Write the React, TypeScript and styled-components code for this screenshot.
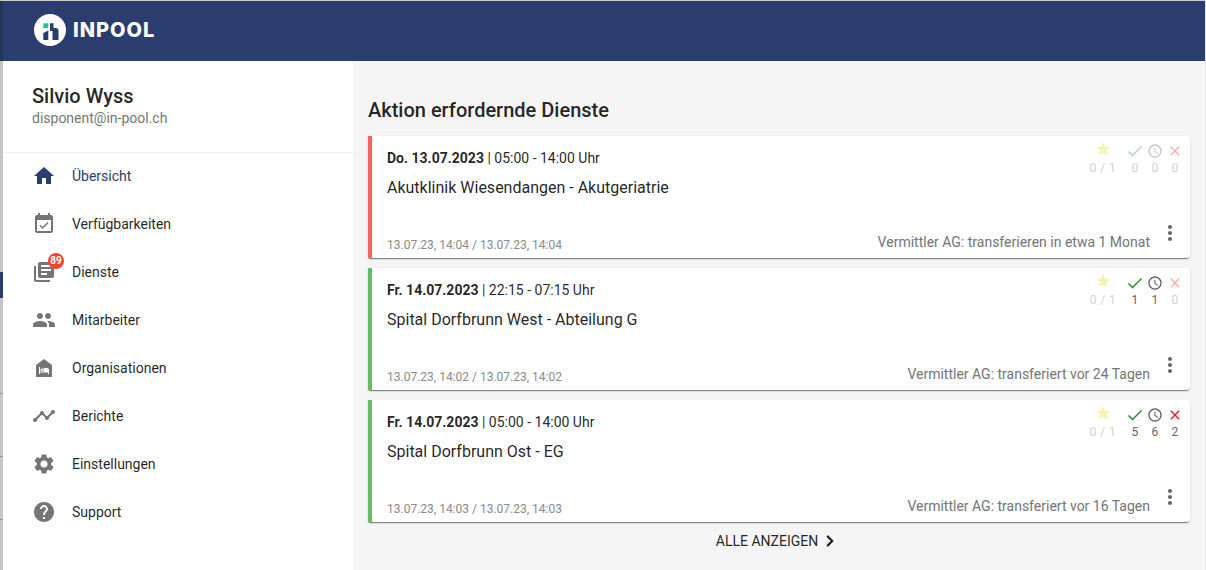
import { ReactNode } from "react";
import styled, { createGlobalStyle } from "styled-components";
import { ChevronRight } from "lucide-react";
import {
  MdAccessTime,
  MdClose,
  MdEventAvailable,
  MdHelp,
  MdHome,
  MdLibraryBooks,
  MdMoreVert,
  MdNightShelter,
  MdPeople,
  MdSettings,
  MdStar,
  MdTimeline,
} from "react-icons/md";

const NAVY = "#2b3d6f";

type NavItem = { label: string; icon: ReactNode; active?: boolean; badge?: number };

const navItems: NavItem[] = [
  { label: "Übersicht", icon: <MdHome />, active: true },
  { label: "Verfügbarkeiten", icon: <MdEventAvailable /> },
  { label: "Dienste", icon: <MdLibraryBooks />, badge: 89 },
  { label: "Mitarbeiter", icon: <MdPeople /> },
  { label: "Organisationen", icon: <MdNightShelter /> },
  { label: "Berichte", icon: <MdTimeline /> },
  { label: "Einstellungen", icon: <MdSettings /> },
  { label: "Support", icon: <MdHelp /> },
];

type Shift = {
  accent: string;
  date: string;
  time: string;
  place: string;
  stamps: string;
  transfer: string;
  counts: [number, number, number];
};

const shifts: Shift[] = [
  {
    accent: "#f26565",
    date: "Do. 13.07.2023",
    time: "05:00 - 14:00 Uhr",
    place: "Akutklinik Wiesendangen - Akutgeriatrie",
    stamps: "13.07.23, 14:04 / 13.07.23, 14:04",
    transfer: "Vermittler AG: transferieren in etwa 1 Monat",
    counts: [0, 0, 0],
  },
  {
    accent: "#66bb6a",
    date: "Fr. 14.07.2023",
    time: "22:15 - 07:15 Uhr",
    place: "Spital Dorfbrunn West - Abteilung G",
    stamps: "13.07.23, 14:02 / 13.07.23, 14:02",
    transfer: "Vermittler AG: transferiert vor 24 Tagen",
    counts: [1, 1, 0],
  },
  {
    accent: "#66bb6a",
    date: "Fr. 14.07.2023",
    time: "05:00 - 14:00 Uhr",
    place: "Spital Dorfbrunn Ost - EG",
    stamps: "13.07.23, 14:03 / 13.07.23, 14:03",
    transfer: "Vermittler AG: transferiert vor 16 Tagen",
    counts: [5, 6, 2],
  },
];

const GlobalStyle = createGlobalStyle`
  html, body {
    margin: 0;
    padding: 0;
    background: #fff;
  }
  body {
    font-family: Roboto, "Liberation Sans", sans-serif;
    color: rgba(0, 0, 0, 0.87);
  }
`;

const Page = styled.div`
  display: flex;
  width: 1206px;
  height: 570px;
  overflow: hidden;
  box-sizing: border-box;
  border-top: 1px solid #c9c9c9;
`;

// strip of the window behind, visible along the left edge
const BackEdge = styled.div`
  width: 3px;
  flex: none;
  display: flex;
  flex-direction: column;
  background: #c6c6c6;
`;

const EdgeTop = styled.div`
  height: 60px;
  background: #243359;
`;

const EdgeBlock = styled.div`
  height: 26px;
  margin-top: 211px;
  background: ${NAVY};
`;

const EdgeTick = styled.div<{ $gap: number }>`
  height: 1px;
  margin-top: ${(p) => p.$gap}px;
  background: #9a9a9a;
`;

const Shell = styled.div`
  flex: 1;
  display: flex;
  flex-direction: column;
  min-width: 0;
  border-right: 1px solid #e6e6e6;
`;

const Header = styled.header`
  height: 60px;
  flex: none;
  display: flex;
  align-items: center;
  gap: 7px;
  padding: 0 0 2px 31px;
  box-sizing: border-box;
  background: ${NAVY};
`;

const LogoMark = styled.svg`
  width: 32px;
  height: 32px;
  display: block;
`;

const LogoText = styled.span`
  font-family: Inter, "Open Sans", sans-serif;
  font-weight: 800;
  font-size: 20px;
  letter-spacing: 1px;
  color: #fff;
`;

const Body = styled.div`
  flex: 1;
  display: flex;
  min-height: 0;
`;

const Sidebar = styled.aside`
  width: 350px;
  flex: none;
  background: #fff;
`;

const Profile = styled.div`
  height: 92px;
  box-sizing: border-box;
  padding: 22px 0 0 29px;
  border-bottom: 1px solid #f0f0f0;
`;

const ProfileName = styled.div`
  font-size: 20px;
  font-weight: 500;
  line-height: 26px;
  color: rgba(0, 0, 0, 0.87);
`;

const ProfileMail = styled.div`
  font-size: 14px;
  line-height: 18px;
  color: #757575;
`;

const NavList = styled.nav`
  display: flex;
  flex-direction: column;
  margin-top: -1px;
`;

const NavRow = styled.div<{ $active?: boolean }>`
  height: 48px;
  display: flex;
  align-items: center;
  gap: 16px;
  padding-left: 29px;
  font-size: 14px;
  color: ${(p) => (p.$active ? NAVY : "rgba(0, 0, 0, 0.87)")};
`;

const NavIcon = styled.span<{ $active?: boolean }>`
  position: relative;
  width: 24px;
  height: 24px;
  font-size: 24px;
  line-height: 0;
  color: ${(p) => (p.$active ? NAVY : "#757575")};
`;

const Badge = styled.span`
  position: absolute;
  top: -7px;
  left: 16px;
  width: 16px;
  height: 16px;
  border-radius: 50%;
  background: #f44336;
  color: #fff;
  font-size: 10px;
  font-weight: 700;
  line-height: 16px;
  text-align: center;
`;

const Main = styled.main`
  flex: 1;
  min-width: 0;
  background: #f5f5f5;
  padding: 36px 15px 0;
`;

const Title = styled.h2`
  margin: 0 0 13px;
  font-size: 20px;
  font-weight: 500;
  line-height: 26px;
  color: rgba(0, 0, 0, 0.87);
`;

const CardList = styled.div`
  display: flex;
  flex-direction: column;
  gap: 10px;
`;

const Card = styled.article<{ $accent: string }>`
  height: 122px;
  box-sizing: border-box;
  display: flex;
  flex-direction: column;
  justify-content: space-between;
  padding: 0 8px 5px 15px;
  background: #fff;
  border-left: 4px solid ${(p) => p.$accent};
  border-radius: 0 4px 4px 0;
  box-shadow: 0 2px 1px -1px rgba(0, 0, 0, 0.45), 0 1px 3px rgba(0, 0, 0, 0.14);
`;

const CardTop = styled.div`
  display: flex;
  justify-content: space-between;
`;

const CardInfo = styled.div`
  padding-top: 13px;
`;

const DateLine = styled.div`
  font-size: 14px;
  line-height: 18px;
  color: rgba(0, 0, 0, 0.87);

  b {
    font-weight: 700;
  }
`;

const Place = styled.div`
  margin-top: 10px;
  font-size: 16px;
  line-height: 22px;
  color: rgba(0, 0, 0, 0.87);
`;

const Status = styled.div`
  display: flex;
  padding-top: 5px;
  margin-right: -3px;
`;

const Stat = styled.div<{ $wide?: boolean; $faded?: boolean; $color?: string }>`
  width: ${(p) => (p.$wide ? 44 : 20)}px;
  padding-top: ${(p) => (p.$wide ? 0 : 2)}px;
  display: flex;
  flex-direction: column;
  align-items: center;
  gap: ${(p) => (p.$wide ? 3 : 1)}px;
  font-size: 12px;
  line-height: 16px;
  letter-spacing: 0.4px;
  color: ${(p) => (p.$faded ? "#d2d2d2" : "#666")};

  svg {
    display: block;
    width: 16px;
    height: 16px;
    color: ${(p) => p.$color};
    opacity: ${(p) => (p.$faded ? 0.35 : 1)};
  }
`;

const CardFooter = styled.div`
  display: flex;
  align-items: flex-end;
  justify-content: space-between;
`;

const Stamps = styled.div`
  font-size: 12px;
  line-height: 16px;
  color: #8a8a8a;
`;

const FooterRight = styled.div`
  display: flex;
  align-items: flex-end;
  gap: 8px;
`;

const Transfer = styled.div`
  font-size: 14px;
  line-height: 18px;
  color: #757575;
  margin-bottom: 2px;
`;

const MoreIcon = styled.span`
  font-size: 24px;
  line-height: 0;
  color: #666;
  margin-bottom: 8px;
`;

const ShowAll = styled.div`
  display: flex;
  align-items: center;
  justify-content: center;
  margin-top: 9px;
  font-size: 14px;
  line-height: 20px;
  color: rgba(0, 0, 0, 0.87);

  svg {
    margin: 0 3px;
  }
`;

const Logo = () => (
  <LogoMark viewBox="0 0 32 32">
    <circle cx="16" cy="16" r="16" fill="#fff" />
    <rect x="9.3" y="9.3" width="5" height="4.8" fill="#12c99b" />
    <path d="M16 9.3h3.5V14h2a3 3 0 0 1 3 3v9H18.5v-9H16z" fill={NAVY} />
    <path d="M9.3 19l5-2.5V26h-5z" fill={NAVY} />
  </LogoMark>
);

// thinner than the Material check in the icon packages
const ThinCheck = () => (
  <svg viewBox="0 0 16 16" fill="none" stroke="currentColor" strokeWidth="1.4">
    <path d="M1.5 8.5l4 4 9-9" />
  </svg>
);

const ShiftCard = ({ shift }: { shift: Shift }) => {
  const [accepted, pending, declined] = shift.counts;
  return (
    <Card $accent={shift.accent}>
      <CardTop>
        <CardInfo>
          <DateLine>
            <b>{shift.date}</b> | {shift.time}
          </DateLine>
          <Place>{shift.place}</Place>
        </CardInfo>
        <Status>
          <Stat $wide $faded $color="#f5d90a">
            <MdStar />
            0 / 1
          </Stat>
          <Stat $faded={accepted === 0} $color="#1b8a1b">
            <ThinCheck />
            {accepted}
          </Stat>
          <Stat $faded={pending === 0} $color="#616161">
            <MdAccessTime />
            {pending}
          </Stat>
          <Stat $faded={declined === 0} $color="#f01414">
            <MdClose />
            {declined}
          </Stat>
        </Status>
      </CardTop>
      <CardFooter>
        <Stamps>{shift.stamps}</Stamps>
        <FooterRight>
          <Transfer>{shift.transfer}</Transfer>
          <MoreIcon>
            <MdMoreVert />
          </MoreIcon>
        </FooterRight>
      </CardFooter>
    </Card>
  );
};

export default function App() {
  return (
    <>
      <GlobalStyle />
      <Page>
        <BackEdge>
          <EdgeTop />
          <EdgeBlock />
          <EdgeTick $gap={95} />
          <EdgeTick $gap={62} />
          <EdgeTick $gap={62} />
        </BackEdge>
        <Shell>
          <Header>
            <Logo />
            <LogoText>INPOOL</LogoText>
          </Header>
          <Body>
            <Sidebar>
              <Profile>
                <ProfileName>Silvio Wyss</ProfileName>
                <ProfileMail>disponent@in-pool.ch</ProfileMail>
              </Profile>
              <NavList>
                {navItems.map((item) => (
                  <NavRow key={item.label} $active={item.active}>
                    <NavIcon $active={item.active}>
                      {item.icon}
                      {item.badge && <Badge>{item.badge}</Badge>}
                    </NavIcon>
                    {item.label}
                  </NavRow>
                ))}
              </NavList>
            </Sidebar>
            <Main>
              <Title>Aktion erfordernde Dienste</Title>
              <CardList>
                {shifts.map((shift) => (
                  <ShiftCard key={shift.stamps} shift={shift} />
                ))}
              </CardList>
              <ShowAll>
                ALLE ANZEIGEN
                <ChevronRight size={18} strokeWidth={3} />
              </ShowAll>
            </Main>
          </Body>
        </Shell>
      </Page>
    </>
  );
}
